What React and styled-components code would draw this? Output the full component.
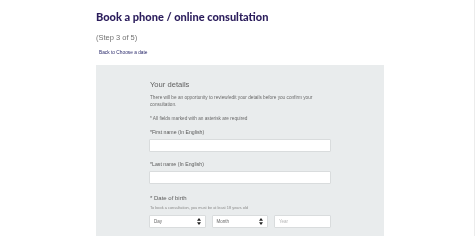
import React from 'react';
import styled, { createGlobalStyle } from 'styled-components';

const GlobalStyle = createGlobalStyle`
	html, body {
		margin: 0;
		padding: 0;
		background: #ffffff;
	}
	body {
		font-family: 'Liberation Sans', Arial, sans-serif;
		-webkit-font-smoothing: antialiased;
	}
`;

const Page = styled.div`
	width: 474px;
	height: 236px;
	border-right: 1px solid #ececec;
	overflow: hidden;
	will-change: transform;
`;

const Main = styled.main`
	width: 288px;
	margin-left: 96px;
`;

const Title = styled.h1`
	font-family: 'Lato', 'Liberation Sans', sans-serif;
	font-size: 11px;
	line-height: 14px;
	font-weight: 900;
	color: #2b1d5c;
	margin: 10px 0 0;
`;

const Step = styled.p`
	font-size: 7.5px;
	line-height: 9px;
	color: #727272;
	margin: 9px 0 0;
`;

const BackLink = styled.a`
	display: block;
	font-size: 4.8px;
	line-height: 6px;
	color: #2b2b6c;
	text-decoration: none;
	margin: 8px 0 0 3px;
`;

const Panel = styled.section`
	background: #e9eced;
	margin-top: 9px;
	height: 172px;
	display: flex;
	justify-content: center;
`;

const Form = styled.form`
	width: 182px;
	padding-top: 15px;
	display: flex;
	flex-direction: column;
`;

const Heading = styled.h2`
	font-size: 7.6px;
	line-height: 9px;
	font-weight: 400;
	color: #5f5f5f;
	margin: 0 0 0 1px;
`;

const Note = styled.p`
	font-size: 4.7px;
	line-height: 7px;
	color: #6a6a6a;
	margin: ${({ $top }) => $top}px 0 0 1px;
`;

const Label = styled.label`
	display: block;
	font-size: 5.2px;
	line-height: 6px;
	color: #5a5a5a;
	margin: ${({ $top }) => $top}px 0 0 1px;
`;

const DobLabel = styled(Label)`
	font-size: 6px;
	line-height: 7px;
`;

const Hint = styled.p`
	font-size: 3.9px;
	line-height: 5px;
	color: #8a8a8a;
	margin: 3px 0 0 1px;
`;

const TextInput = styled.input`
	box-sizing: border-box;
	width: 182px;
	height: 13px;
	margin-top: 4px;
	border: 1px solid #d9dcdd;
	border-radius: 1px;
	background: #ffffff;
	padding: 0 4px;
	font-size: 4.5px;
	outline: none;
`;

const DateRow = styled.div`
	display: flex;
	gap: 6px;
	margin-top: 5px;
`;

const SelectBox = styled.div`
	box-sizing: border-box;
	width: 57px;
	height: 13px;
	border: 1px solid #d9dcdd;
	border-radius: 1px;
	background: #ffffff;
	display: flex;
	align-items: center;
	justify-content: space-between;
	padding: 0 4px 0 4px;
	font-size: 4.5px;
	color: #666;
`;

const YearInput = styled.input`
	box-sizing: border-box;
	width: 57px;
	height: 13px;
	border: 1px solid #d9dcdd;
	border-radius: 1px;
	background: #ffffff;
	padding: 0 4px;
	font-family: 'Liberation Sans', Arial, sans-serif;
	font-size: 4.5px;
	outline: none;
	&::placeholder {
		color: #b5b5b5;
	}
`;

const Arrows = () => (
	<svg width="4" height="7" viewBox="0 0 4 7">
		<path d="M2 0 L4 2.8 L0 2.8 Z" fill="#222" />
		<path d="M2 7 L4 4.2 L0 4.2 Z" fill="#222" />
	</svg>
);

const Select = ({ label }) => (
	<SelectBox>
		<span>{label}</span>
		<Arrows />
	</SelectBox>
);

const App = () => {
	return (
		<Page>
			<GlobalStyle />
			<Main>
				<Title>Book a phone / online consultation</Title>
				<Step>(Step 3 of 5)</Step>
				<BackLink href="#">Back to Choose a date</BackLink>
				<Panel>
					<Form>
						<Heading>Your details</Heading>
						<Note $top={5}>
							There will be an opportunity to review/edit your details before you confirm your
							consultation.
						</Note>
						<Note $top={7}>* All fields marked with an asterisk are required</Note>
						<Label $top={7}>*First name (In English)</Label>
						<TextInput type="text" />
						<Label $top={9}>*Last name (In English)</Label>
						<TextInput type="text" />
						<DobLabel $top={11}>* Date of birth</DobLabel>
						<Hint>To book a consultation, you must be at least 18 years old</Hint>
						<DateRow>
							<Select label="Day" />
							<Select label="Month" />
							<YearInput placeholder="Year" />
						</DateRow>
					</Form>
				</Panel>
			</Main>
		</Page>
	);
};

export default App;
